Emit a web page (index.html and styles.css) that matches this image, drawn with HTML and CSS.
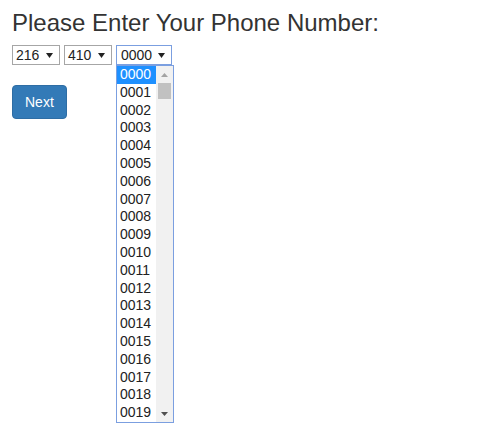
FILE: index.html
```html
<!DOCTYPE html>
<html>
<head>
<meta charset="utf-8">
<link rel="stylesheet" href="styles.css">
</head>
<body>
<div class="page">
  <h3 class="title">Please Enter Your Phone Number:</h3>
  <div class="phone-row">
    <div class="sel">
      <span class="sel-val">216</span>
      <svg class="sel-arrow" width="7" height="5" viewBox="0 0 7 5"><polygon points="0,0 7,0 3.5,5" fill="#222"/></svg>
    </div>
    <div class="sel">
      <span class="sel-val">410</span>
      <svg class="sel-arrow" width="7" height="5" viewBox="0 0 7 5"><polygon points="0,0 7,0 3.5,5" fill="#222"/></svg>
    </div>
    <div class="sel sel-wide sel-open">
      <span class="sel-val">0000</span>
      <svg class="sel-arrow" width="7" height="5" viewBox="0 0 7 5"><polygon points="0,0 7,0 3.5,5" fill="#222"/></svg>
      <div class="popup">
        <ul class="options">
          <li class="opt opt-active">0000</li>
          <li class="opt">0001</li>
          <li class="opt">0002</li>
          <li class="opt">0003</li>
          <li class="opt">0004</li>
          <li class="opt">0005</li>
          <li class="opt">0006</li>
          <li class="opt">0007</li>
          <li class="opt">0008</li>
          <li class="opt">0009</li>
          <li class="opt">0010</li>
          <li class="opt">0011</li>
          <li class="opt">0012</li>
          <li class="opt">0013</li>
          <li class="opt">0014</li>
          <li class="opt">0015</li>
          <li class="opt">0016</li>
          <li class="opt">0017</li>
          <li class="opt">0018</li>
          <li class="opt">0019</li>
        </ul>
        <div class="scrollbar">
          <div class="sb-btn"><svg width="7" height="4" viewBox="0 0 7 4"><polygon points="0,4 7,4 3.5,0" fill="#a3a3a3"/></svg></div>
          <div class="sb-thumb"></div>
          <div class="sb-space"></div>
          <div class="sb-btn"><svg width="7" height="4" viewBox="0 0 7 4"><polygon points="0,0 7,0 3.5,4" fill="#505050"/></svg></div>
        </div>
      </div>
    </div>
  </div>
  <button class="btn-next">Next</button>
</div>
</body>
</html>
```

FILE: styles.css
```css
* { box-sizing: border-box; }

html, body {
  min-height: 100%;
}

body {
  margin: 0;
  font-family: "Liberation Sans", Arial, sans-serif;
  font-size: 14px;
  color: #333;
  background: #fff;
}

.page {
  padding: 0 12px;
  min-height: 440px;
}

.title {
  margin: 10px 0 9px;
  font-size: 24px;
  font-weight: normal;
  line-height: 26px;
  color: #333;
}

.phone-row {
  display: flex;
  gap: 4px;
  height: 20px;
}

.sel {
  position: relative;
  width: 48px;
  height: 20px;
  border: 1px solid #a6a6a6;
  background: #fff;
  display: flex;
  align-items: center;
  padding: 0 6px 0 3px;
  justify-content: space-between;
  color: #222;
  font-size: 14px;
  line-height: 18px;
}

.sel-wide {
  width: 56px;
  padding-right: 6px;
  padding-left: 4px;
}

.sel-open {
  border-color: #7b9fe0;
}

.sel-arrow {
  display: block;
  flex: none;
}

.popup {
  position: absolute;
  left: -1px;
  top: 19px;
  width: 58px;
  height: 358px;
  border: 1px solid #7b9fe0;
  background: #fff;
  display: flex;
  z-index: 5;
}

.options {
  list-style: none;
  margin: 0;
  padding: 0;
  flex: 1;
}

.opt {
  height: 17.8px;
  line-height: 17.8px;
  padding-left: 3px;
  font-size: 14px;
  color: #222;
}

.opt-active {
  background: #1e90ff;
  color: #fff;
}

.scrollbar {
  width: 17px;
  background: #f1f1f1;
  display: flex;
  flex-direction: column;
}

.sb-btn {
  height: 17px;
  display: flex;
  align-items: center;
  justify-content: center;
}

.sb-btn svg { display: block; }

.sb-thumb {
  height: 16px;
  margin: 0 2px;
  background: #c1c1c1;
}

.sb-space { flex: 1; }

.btn-next {
  margin-top: 20px;
  display: block;
  height: 34px;
  padding: 6px 12px;
  border: 1px solid #2e6da4;
  border-radius: 4px;
  background: #337ab7;
  color: #fff;
  font-family: "Liberation Sans", Arial, sans-serif;
  font-size: 14px;
  line-height: 20px;
}
```
